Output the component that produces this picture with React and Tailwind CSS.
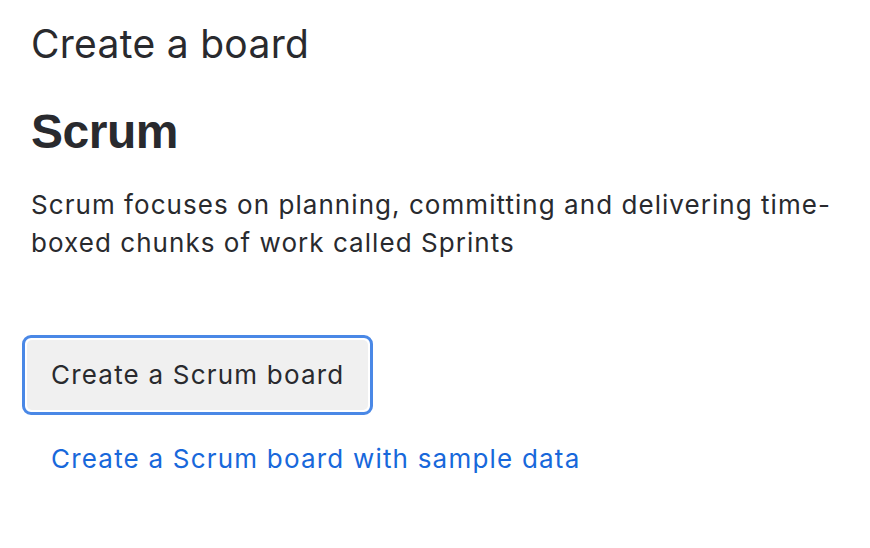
export default function App() {
  return (
    <div className="min-h-screen bg-white px-[31px] pt-[24px] text-[#292a2e]" style={{ fontFamily: 'Inter, "Liberation Sans", sans-serif' }}>
      <h1 className="text-[39px] font-normal leading-none tracking-[0.3px]">Create a board</h1>
      <h2 className="mt-[45px] text-[48px] font-bold leading-none tracking-[-0.5px]" style={{ fontFamily: '"Liberation Sans", Arial, sans-serif' }}>
        Scrum
      </h2>
      <p className="mt-[30px] max-w-[815px] text-[26px] leading-[38px] tracking-[1.05px]">
        Scrum focuses on planning, committing and delivering time-boxed chunks of work called Sprints
      </p>
      <div className="mt-[73px] -ml-[9px] flex flex-col items-start">
        <button className="rounded-[9px] border-[3px] border-[#4a88e6] p-[2px]">
          <span className="block rounded-[5px] bg-[#f0f0f0] px-[24px] py-[18px] text-[26px] leading-[34px] tracking-[1.2px] text-[#292a2e]">
            Create a Scrum board
          </span>
        </button>
        <a href="#" className="mt-[27px] ml-[29px] text-[26px] leading-[34px] tracking-[1.2px] text-[#1868db]">
          Create a Scrum board with sample data
        </a>
      </div>
    </div>
  );
}
